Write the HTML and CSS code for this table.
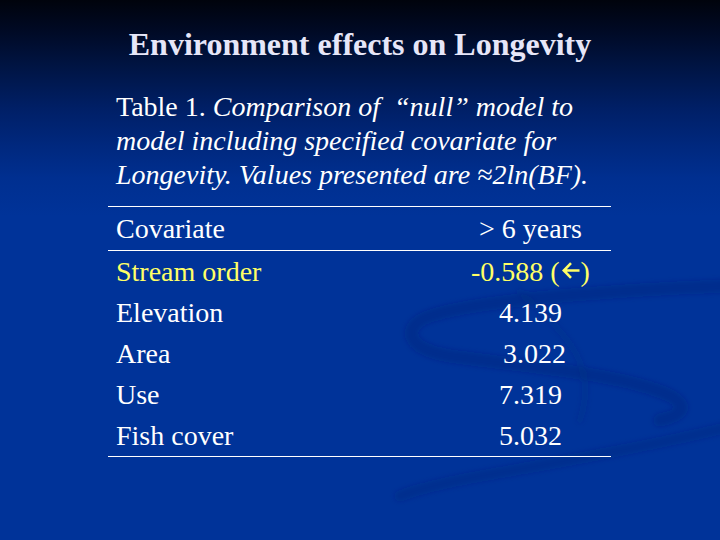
FILE: index.html
```html
<!DOCTYPE html>
<html>
<head>
<meta charset="utf-8">
<link rel="stylesheet" href="styles.css">
</head>
<body>
<div class="slide">
  <svg class="swoosh" width="720" height="540" viewBox="0 0 720 540">
    <defs>
      <filter id="soft" x="-10%" y="-10%" width="120%" height="120%">
        <feGaussianBlur stdDeviation="2.5" />
      </filter>
    </defs>
    <g filter="url(#soft)">
      <path d="M725 286 C 620 290, 470 300, 425 318 C 400 330, 410 350, 450 356 C 520 366, 600 372, 650 388 C 690 400, 690 414, 660 420" />
      <path class="thin" d="M725 428 C 640 448, 560 462, 470 478 C 430 486, 410 492, 400 496" />
      <path class="faint" d="M520 292 C 560 330, 600 360, 580 420" />
    </g>
  </svg>
  <h1 class="title">Environment effects on Longevity</h1>
  <div class="content">
    <p class="caption">Table 1. <em>Comparison of&nbsp; “null” model to<br>model including specified covariate for<br>Longevity. Values presented are ≈2ln(BF).</em></p>
    <table class="data">
      <thead>
        <tr><th class="cov">Covariate</th><th class="val">&gt; 6 years</th></tr>
      </thead>
      <tbody>
        <tr class="hl"><td class="cov">Stream order</td><td class="val">-0.588 (<svg class="arrow" width="18" height="17" viewBox="0 0 18 17"><path d="M9 1.2 L1.8 8.5 L9 15.8 M1.8 8.5 H17.5" /></svg>)</td></tr>
        <tr><td class="cov">Elevation</td><td class="val">4.139</td></tr>
        <tr><td class="cov">Area</td><td class="val nudge">3.022</td></tr>
        <tr><td class="cov">Use</td><td class="val">7.319</td></tr>
        <tr><td class="cov">Fish cover</td><td class="val">5.032</td></tr>
      </tbody>
    </table>
  </div>
</div>
</body>
</html>
```

FILE: styles.css
```css
html, body {
  margin: 0;
  padding: 0;
}

body {
  width: 720px;
  height: 540px;
  overflow: hidden;
  font-family: "Liberation Serif", "Times New Roman", serif;
}

.slide {
  position: relative;
  width: 720px;
  height: 540px;
  overflow: hidden;
  background: linear-gradient(180deg, #00030c 0%, #000a26 6%, #001442 12%, #001f66 20%, #00287e 27%, #002f90 33%, #003399 40%, #003399 100%);
  padding-top: 25px;
  box-sizing: border-box;
}

.swoosh {
  position: absolute;
  left: 0;
  top: 0;
  pointer-events: none;
}

.swoosh path {
  fill: none;
  stroke: #00266f;
  stroke-width: 13;
  stroke-linecap: round;
  opacity: 0.3;
}

.swoosh path.thin {
  stroke-width: 11;
  opacity: 0.26;
}

.swoosh path.faint {
  stroke-width: 7;
  opacity: 0.14;
}

.title {
  position: relative;
  margin: 0;
  text-align: center;
  font-size: 32px;
  line-height: 38px;
  font-weight: bold;
  color: #e6e6f8;
}

.content {
  position: relative;
  margin: 27px 0 0 108px;
  width: 503px;
}

.caption {
  margin: 0 0 14px 0;
  padding-left: 8px;
  font-size: 28px;
  line-height: 34px;
  color: #ffffff;
}

.caption em {
  font-style: italic;
}

.data {
  width: 503px;
  border-collapse: collapse;
  font-size: 28px;
  line-height: 34px;
  color: #ffffff;
}

.data thead tr {
  border-top: 1px solid #ffffff;
  border-bottom: 1px solid #ffffff;
}

.data tbody tr:last-child {
  border-bottom: 1px solid #ffffff;
}

.data th {
  font-weight: normal;
  padding: 5px 8px 4px 8px;
}

.data td {
  padding: 3.5px 8px;
}

.data .cov {
  text-align: left;
  width: 333px;
}

.data .val {
  text-align: center;
  width: 138px;
  white-space: nowrap;
}

.data .val.nudge {
  padding-left: 16px;
}

.data tr.hl {
  color: #ffff66;
}

.arrow {
  vertical-align: 2px;
  margin: 0 1px 0 2px;
}

.arrow path {
  fill: none;
  stroke: #ffff66;
  stroke-width: 2.6;
  stroke-linecap: butt;
  stroke-linejoin: miter;
}
```
